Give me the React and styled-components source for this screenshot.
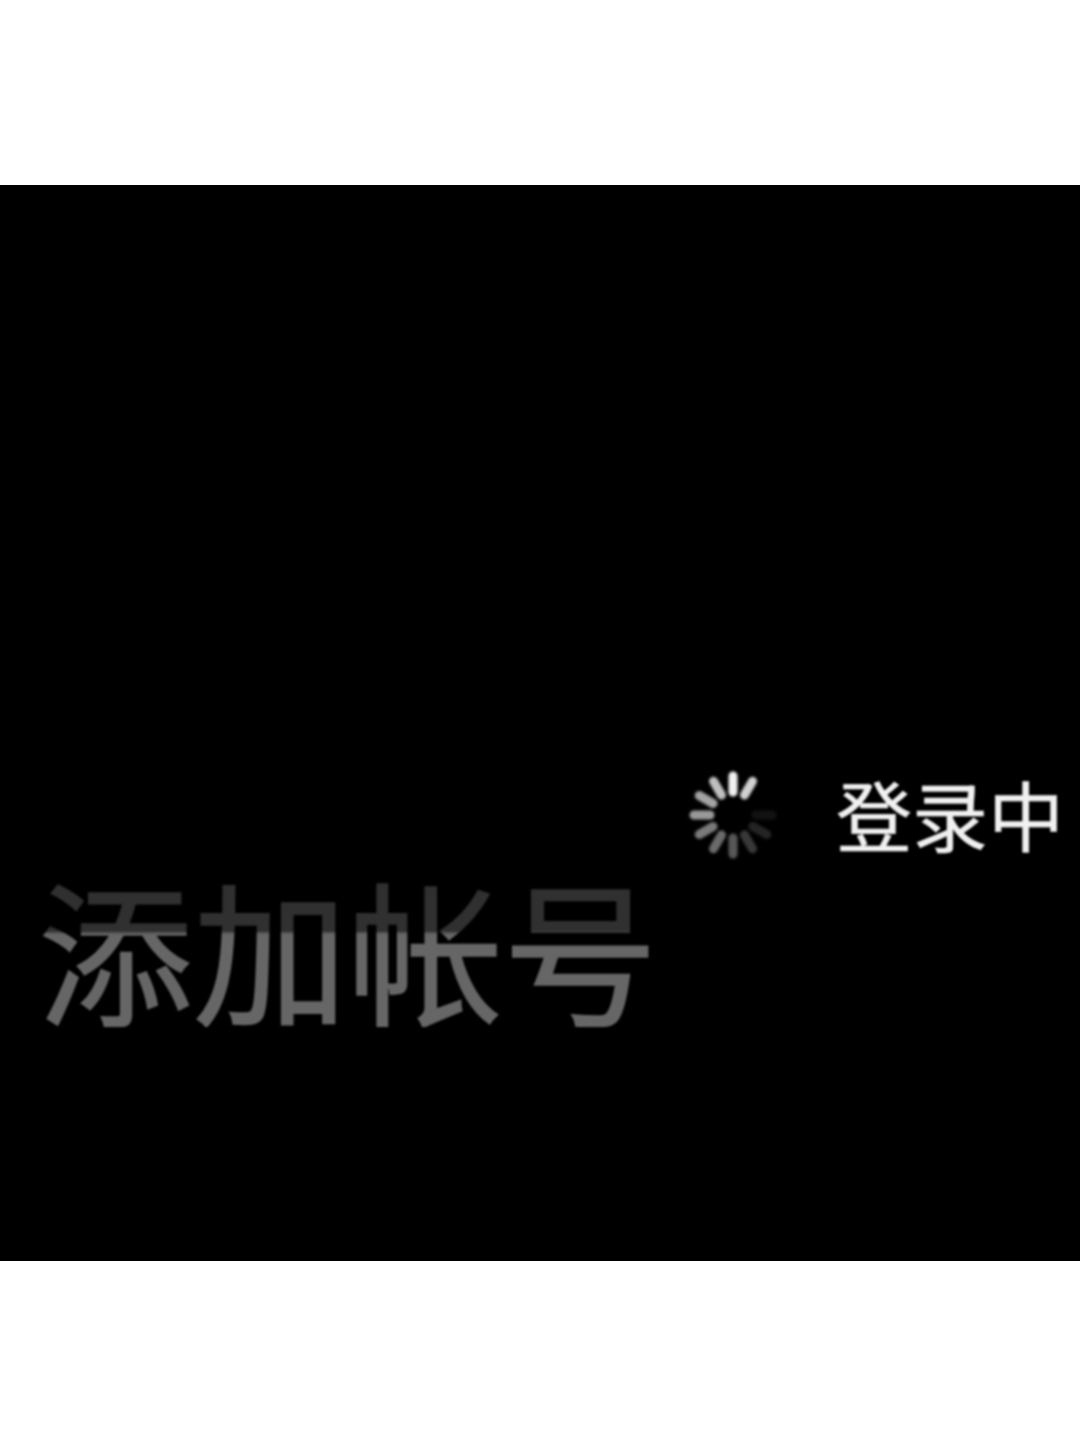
import React from 'react';
import styled, { createGlobalStyle } from 'styled-components';

const Global = createGlobalStyle`
  html, body { margin: 0; padding: 0; background: #fff; }
`;

const Page = styled.div`
  width: 1080px;
  height: 1439px;
  padding-top: 185px;
  box-sizing: border-box;
  background: #fff;
  font-family: "Noto Sans CJK SC", "Noto Sans", sans-serif;
`;

const Screen = styled.div`
  width: 100%;
  height: 1076px;
  background: #000;
  padding-top: 585px;
  box-sizing: border-box;
  overflow: hidden;
`;

const StatusRow = styled.div`
  display: flex;
  align-items: center;
  height: 90px;
  padding-left: 688px;
`;

const SpinnerIcon = styled.svg`
  flex: none;
  filter: blur(1.5px);
`;

const StatusText = styled.span`
  margin-left: 58px;
  font-size: 76px;
  font-weight: 400;
  line-height: 90px;
  color: #f0f0f0;
  -webkit-text-stroke: 0.5px #f0f0f0;
  white-space: nowrap;
  filter: blur(0.8px);
  transform: translateY(-2px);
`;

const AddAccount = styled.div`
  margin-top: 7px;
  padding-left: 38px;
  font-size: 155px;
  font-weight: 400;
  line-height: 160px;
  white-space: nowrap;
  width: fit-content;
  color: transparent;
  -webkit-text-stroke: 1.5px transparent;
  background: linear-gradient(#303030 0 64px, #666 67px);
  background-clip: text;
  -webkit-background-clip: text;
  filter: blur(0.8px);
`;

// brightness of each spoke, clockwise from twelve o'clock
const SPOKES = [0.95, 0.82, 0, 0.07, 0.14, 0.22, 0.34, 0.42, 0.48, 0.6, 0.64, 0.75];

function Spinner() {
  return (
    <SpinnerIcon width="90" height="90" viewBox="0 0 90 90">
      {SPOKES.map((opacity, i) => (
        <line
          key={i}
          x1="45"
          y1="6"
          x2="45"
          y2="22"
          stroke="#fff"
          strokeWidth="9"
          strokeLinecap="round"
          opacity={opacity}
          transform={`rotate(${i * 30} 45 45)`}
        />
      ))}
    </SpinnerIcon>
  );
}

export default function App() {
  return (
    <Page>
      <Global />
      <Screen>
        <StatusRow>
          <Spinner />
          <StatusText>登录中</StatusText>
        </StatusRow>
        <AddAccount>添加帐号</AddAccount>
      </Screen>
    </Page>
  );
}
